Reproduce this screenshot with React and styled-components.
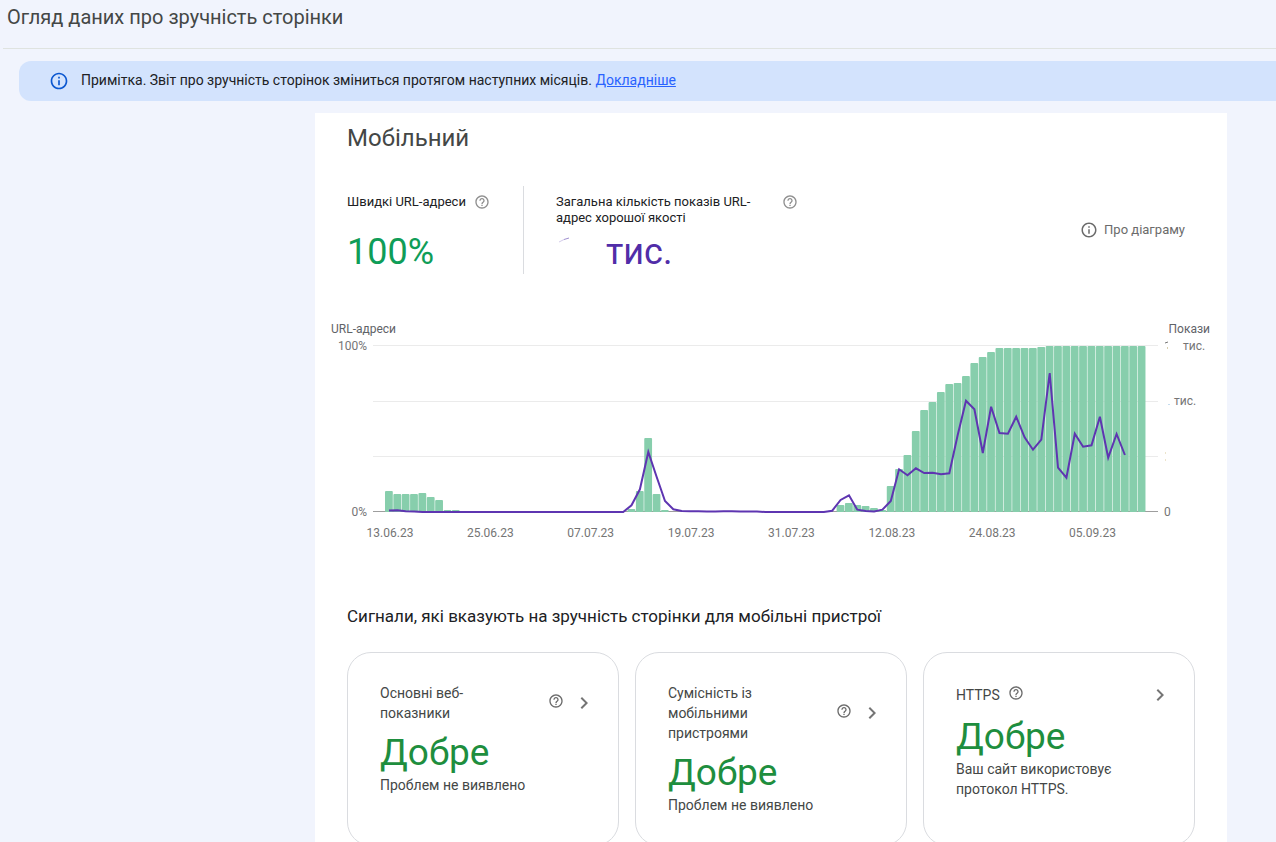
import React from "react"
import styled, { createGlobalStyle } from "styled-components"
import { MdChevronRight, MdHelpOutline, MdInfoOutline } from "react-icons/md"

const GlobalStyle = createGlobalStyle`
  * {
    box-sizing: border-box;
  }

  body {
    margin: 0;
    background: #f1f4fd;
    color: #202124;
    font-family: Roboto, "Liberation Sans", sans-serif;
    font-size: 14px;
    line-height: 20px;
  }
`

const Header = styled.header`
  margin-left: 3px;
  padding: 3px 4px 17px;
  border-bottom: 1px solid #dfe3e0;
`

const PageTitle = styled.h1`
  margin: 0;
  color: #444746;
  font-size: 20px;
  font-weight: 400;
  line-height: 28px;
`

const Banner = styled.aside`
  display: flex;
  align-items: flex-start;
  gap: 12px;
  margin: 12px 0 12px 19px;
  padding: 9px 30px 10px;
  border-radius: 12px 0 0 12px;
  background: #d3e3fd;

  > svg {
    flex: none;
    margin-top: 1px;
    color: #0b57d0;
  }

  a {
    color: #2962ff;
  }
`

const Panel = styled.main`
  max-width: 912px;
  margin: 0 49px 0 auto;
  padding: 9px 32px 32px;
  background: #fff;
`

const DeviceTitle = styled.h2`
  margin: 0;
  color: #444746;
  font-size: 24px;
  font-weight: 400;
  line-height: 32px;
`

const Summary = styled.div`
  display: flex;
  align-items: center;
  margin-top: 32px;
`

const Metric = styled.section`
  display: flex;
  flex-direction: column;
  width: ${props => props.$width}px;
  height: 88px;
  padding-top: 8px;
  padding-left: ${props => (props.$divided ? 32 : 0)}px;
  border-left: ${props => (props.$divided ? "1px solid #dadce0" : "none")};
`

const MetricLabel = styled.div`
  display: flex;
  justify-content: ${props => (props.$spread ? "space-between" : "flex-start")};
  gap: 8px;
  font-size: 13px;
  line-height: 16px;

  > svg {
    flex: none;
    color: #8f8f8f;
  }
`

const MetricValue = styled.div`
  display: flex;
  gap: 36px;
  margin-top: auto;
  color: ${props => props.$color};
  font-size: 36px;
  line-height: 44px;

  > svg {
    margin-top: 4px;
  }
`

const AboutButton = styled.button`
  display: flex;
  align-items: center;
  gap: 6px;
  margin-left: auto;
  padding: 0 10px 0 0;
  border: 0;
  background: transparent;
  color: #6b6b6b;
  font: inherit;
  font-size: 13px;
  cursor: pointer;
`

const ChartBox = styled.figure`
  margin: 46px -16px 0;

  svg {
    display: block;
    width: 100%;
    height: auto;
  }

  text {
    fill: #757575;
    font-size: 12px;
  }

  .axis-name {
    fill: #5f6368;
  }
`

const SignalsTitle = styled.h3`
  margin: 60px 0 24px;
  font-size: 17px;
  font-weight: 400;
  line-height: 24px;
`

const Cards = styled.div`
  display: grid;
  grid-template-columns: repeat(3, 1fr);
  gap: 16px;
`

const Card = styled.article`
  min-height: 194px;
  padding: 30px 22px 30px 32px;
  border: 1px solid #dadce0;
  border-radius: 24px;
  color: #444746;
`

const CardHeader = styled.div`
  display: flex;
  align-items: center;
`

const CardTitle = styled.h4`
  flex: ${props => (props.$multiline ? "1" : "none")};
  margin: 0;
  font-size: 14px;
  font-weight: 400;
  white-space: pre-line;
`

const HelpButton = styled.button`
  display: flex;
  margin: 0 0 4px 8px;
  padding: 0;
  border: 0;
  background: transparent;
  color: #6b6b6b;
  cursor: pointer;
`

const OpenLink = styled.a`
  display: flex;
  margin-left: auto;
  padding-left: 8px;
  color: #757575;
`

const Status = styled.div`
  margin-top: 8px;
  color: #1e8e3e;
  font-size: 37px;
  line-height: 44px;
`

const Description = styled.p`
  margin: 0;
`

// height of every daily bar, in chart units (166 = 100%)
const bars = [
  21, 18, 18, 18, 19, 15, 12, 2, 2,
  ...Array(20).fill(0),
  3, 21, 74, 18, 2,
  ...Array(20).fill(0),
  7, 9, 7, 6, 4, 2, 26, 43, 57, 81, 102, 110, 120, 128, 129, 136, 149, 155, 160,
  164, 164, 164, 164, 164, 165,
  ...Array(12).fill(166),
]

// impressions line, same units
const impressions = [
  1.5, 1.7, 0.7, 0.5,
  ...Array(25).fill(0),
  6.7, 22.7, 60, 35.3, 11, 2.7, 1, 0.8, 0.8, 0.4, 0.4, 0.7, 0.7, 0.4, 0.4, 0.4,
  ...Array(8).fill(0),
  1.3, 12, 16.7, 2.3, 1, 0.5, 2.3, 11, 42.7, 36.7, 43.7, 39, 39.3, 37.7, 38.7,
  77, 111.3, 102.7, 59, 105.3, 79, 78.3, 95.3, 74.7, 62.3, 72.3, 139, 44.3,
  34.3, 78.3, 65.3, 66.7, 95.3, 54.3, 78, 57,
]

const dates = [
  "13.06.23",
  "25.06.23",
  "07.07.23",
  "19.07.23",
  "31.07.23",
  "12.08.23",
  "24.08.23",
  "05.09.23",
]

const STEP = 8.363
const BASE = 192

const signals = [
  {
    id: "vitals",
    title: "Основні веб-\nпоказники",
    multiline: true,
    description: "Проблем не виявлено",
  },
  {
    id: "mobile",
    title: "Сумісність із\nмобільними\nпристроями",
    multiline: true,
    description: "Проблем не виявлено",
  },
  {
    id: "https",
    title: "HTTPS",
    description: "Ваш сайт використовує протокол HTTPS.",
  },
]

function Chart() {
  const points = impressions
    .map((v, i) => `${(58 + i * STEP).toFixed(1)},${BASE - v}`)
    .join(" ")

  return (
    <ChartBox>
      <svg viewBox="0 0 880 224" role="img" aria-label="URL-адреси, Покази">
        {[25.5, 81.5, 136.5].map(y => (
          <path key={y} d={`M42 ${y}H827`} stroke="#ebebeb" />
        ))}
        <path d="M42 191.5H827" stroke="#9e9e9e" />
        {bars.map((h, i) =>
          h > 0 ? (
            <rect
              key={i}
              x={54 + i * STEP}
              y={BASE - h}
              width="7.8"
              height={h}
              rx="1"
              fill="#87ceac"
            />
          ) : null
        )}
        <polyline
          points={points}
          fill="none"
          stroke="#5e35b1"
          strokeWidth="2"
        />
        <text className="axis-name" x="0" y="13">URL-адреси</text>
        <text className="axis-name" x="879" y="13" textAnchor="end">Покази</text>
        <text x="36" y="30" textAnchor="end">100%</text>
        <text x="36" y="196" textAnchor="end">0%</text>
        <text x="852" y="30">тис.</text>
        <text x="843" y="85">тис.</text>
        <text x="833" y="196">0</text>
        <path d="M834 23l3-1" stroke="#757575" />
        <path d="M836.5 27v2" stroke="#d8cfae" />
        <path d="M837 84.5h2" stroke="#c5dcee" />
        <path d="M834.5 132v2M834.5 139v2" stroke="#ece4cc" />
        {dates.map((d, i) => (
          <text key={d} x={59 + i * 12 * STEP} y="217" textAnchor="middle">
            {d}
          </text>
        ))}
      </svg>
    </ChartBox>
  )
}

export default function App() {
  return (
    <>
      <GlobalStyle />
      <Header>
        <PageTitle>Огляд даних про зручність сторінки</PageTitle>
      </Header>
      <Banner>
        <MdInfoOutline size={20} />
        <span>
          Примітка. Звіт про зручність сторінок зміниться протягом наступних
          місяців. <a href="#more">Докладніше</a>
        </span>
      </Banner>
      <Panel>
        <DeviceTitle>Мобільний</DeviceTitle>
        <Summary>
          <Metric $width={176}>
            <MetricLabel>
              Швидкі URL-адреси
              <MdHelpOutline size={16} />
            </MetricLabel>
            <MetricValue $color="#0f9d58">100%</MetricValue>
          </Metric>
          <Metric $width={275} $divided>
            <MetricLabel $spread>
              <span>Загальна кількість показів URL-адрес хорошої якості</span>
              <MdHelpOutline size={16} />
            </MetricLabel>
            <MetricValue $color="#512da8">
              <svg width="14" height="12" viewBox="0 0 14 12" fill="none">
                <path d="M3 8L8 5.5" stroke="#d3cbea" />
                <path d="M8 5.5L13 4" stroke="#9f8fd0" />
              </svg>
              тис.
            </MetricValue>
          </Metric>
          <AboutButton type="button">
            <MdInfoOutline size={18} />
            Про діаграму
          </AboutButton>
        </Summary>
        <Chart />
        <SignalsTitle>
          Сигнали, які вказують на зручність сторінки для мобільні пристрої
        </SignalsTitle>
        <Cards>
          {signals.map(s => (
            <Card key={s.id}>
              <CardHeader>
                <CardTitle $multiline={s.multiline}>{s.title}</CardTitle>
                <HelpButton type="button" aria-label="Довідка">
                  <MdHelpOutline size={16} />
                </HelpButton>
                <OpenLink href={`#${s.id}`} aria-label={s.title}>
                  <MdChevronRight size={24} />
                </OpenLink>
              </CardHeader>
              <Status>Добре</Status>
              <Description>{s.description}</Description>
            </Card>
          ))}
        </Cards>
      </Panel>
    </>
  )
}
